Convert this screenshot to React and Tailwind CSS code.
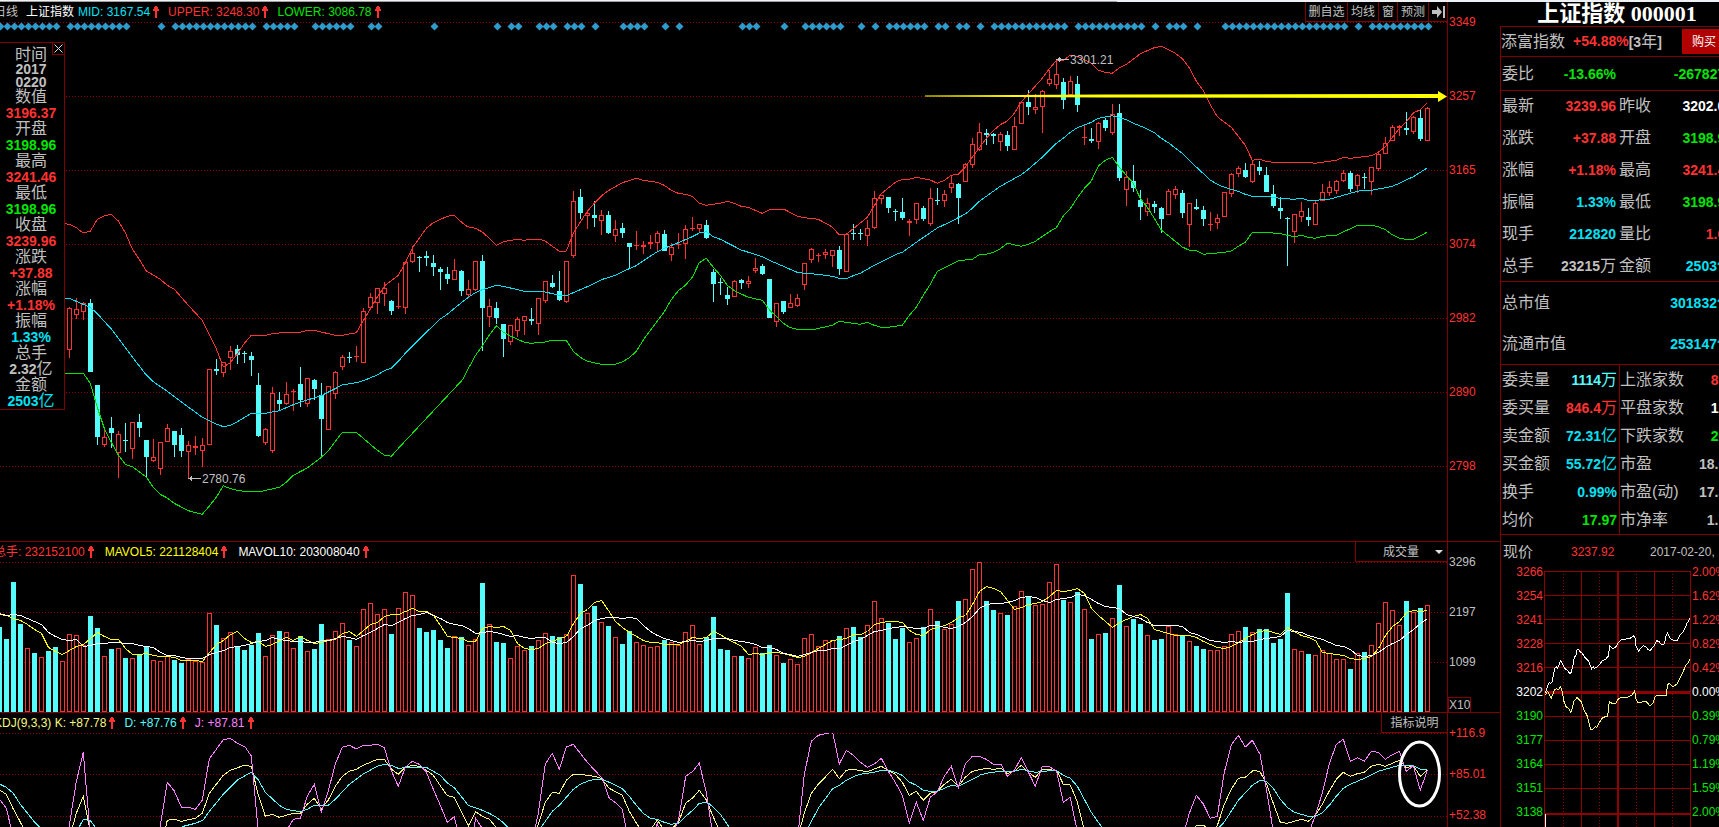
import {useState} from "react";

const SLOT = 7;
const RED = "#ff3232";
const CYAN = "#54fcfc";

// candles: direction, high, body top, body bottom, low (three units to a pixel, counted from `top`)
const CANDLES = [
    {
        from: 10, top: 200, rows: `R320,323,450,473 R294,327,345,357 R305,310,335,360 C297,309,516,516 C555,555,711,735
R688,711,735,741 C651,684,699,744 R693,702,759,834 C669,720,722,756 R666,666,747,777 C642,666,684,711 C720,720,771,832
R717,771,783,786 R726,726,807,825 R672,684,726,726 C693,693,735,771 C684,705,753,771 R723,735,756,834 R708,739,744,765
R714,735,753,801 R507,507,735,735 C477,507,513,525 R486,486,519,531 R438,453,474,510 C435,447,465,492 C453,459,461,489
C456,467,480,528 C519,555,708,711 R683,687,729,735 R561,579,753,759 C576,600,612,630 R546,582,612,615 R567,573,575,633
C501,552,600,621 R534,534,612,621 C537,540,567,600 C549,585,657,773 R558,558,690,690 R513,516,582,597 R465,471,501,510
C456,471,473,489 R438,468,470,486 R324,333,489,489 R280,291,324,327 R264,264,309,342`
    },
    {
        from: 55, top: 160, rows: `R366,384,402,438 C420,423,453,465 R369,438,440,447 R306,306,444,462 R258,279,306,309
C288,291,293,336 C273,289,294,318 C285,309,321,348 C321,327,336,390 C321,342,357,372 R297,330,360,360 C330,333,393,408
R360,387,405,414 R303,303,390,393 C285,303,444,573 R417,438,471,501 C426,444,474,492 C492,492,537,591 R495,495,546,555
R471,477,513,531 R468,468,483,525 C444,477,483,495 R414,414,492,525 R363,363,423,429 C345,369,381,384 C333,393,420,423
R303,303,426,429 R93,123,288,294 C87,111,159,177 R150,159,168,207 C123,165,174,201 R150,165,183,225 C153,165,219,222
R180,207,228,246 C189,204,219,234 C249,249,261,324 R213,255,257,270 R243,255,261,282 R225,246,252,267 R213,219,249,273
C210,222,273,273 R249,261,285,303 R219,251,254,267 R195,207,252,297 R171,204,206,213 R192,192,207,219 C180,195,234,237
C327,336,372,426 C354,366,369,405 C381,405,417,435 R360,363,411,411 C357,360,369,387 R348,363,372,384 R294,324,333,339
C312,318,342,345 C357,357,474,474 R429,429,486,501`
    },
    {
        from: 112, top: 30, rows: `C813,813,846,852 R792,819,834,834 R792,804,828,831 R699,699,765,780 R654,657,690,699
R669,675,677,696 R657,666,675,687 R660,660,678,711 C648,660,717,735 R612,612,726,726 C582,609,611,630 C597,609,611,630
R570,594,618,648 R483,504,594,597 R495,495,507,522 C501,501,534,549 C537,543,545,573 C504,546,564,570 R567,573,579,618
R519,519,570,582 C528,534,567,573 R474,504,582,588 C474,510,512,525 R480,492,513,531 R438,459,474,489 C459,462,504,582
R399,402,456,456 R324,342,405,414 R279,306,360,363 C297,309,315,345 C309,312,318,342 R306,312,336,363 C303,315,348,363
R261,288,360,360 R216,216,282,282 C180,216,231,255 R192,231,240,252 R180,183,231,309 R119,147,162,168 R90,132,165,177
C144,156,210,237 R138,153,195,195 C138,162,225,246 R284,321,323,345 C294,327,333,339 R276,279,336,357 C264,270,294,303
R222,252,309,315 C222,249,444,453 R423,441,480,528 C405,453,474,486 C480,510,531,570 R504,519,546,558 C513,522,531,549
C531,534,567,609 R477,483,555,555 R468,477,495,507 C480,489,549,564 R519,519,585,651 C507,531,537,540 C528,540,567,588
R546,581,583,603 R552,564,579,597 R486,486,561,561 R429,432,492,501 R408,414,432,441 C399,420,441,444 R393,402,456,459
C393,411,423,435 C411,435,486,486 C465,492,528,534 C501,534,543,567 C561,564,566,708 R552,552,606,639 R516,543,561,576
C534,561,570,588 R513,519,585,585 R462,486,513,513 R453,471,489,498 R450,453,483,492 R420,429,453,456 C423,429,477,486
R432,435,468,489 C429,441,443,477 R411,411,456,495 R363,372,417,423 R321,339,372,372 R285,291,333,333 R285,288,294,318
C246,294,300,315 R258,261,306,312 C240,264,327,333 R231,234,333,333`
    },
];

const PRICE_TOP = 22;
const candles = CANDLES.flatMap(({from, top, rows}) =>
    rows.split(/\s+/).map((row, k) => {
        const [high, open, close, low] = row.slice(1).split(",").map((v) => Math.round(v / 3) + top - PRICE_TOP);
        return {i: from + k, up: row[0] === "R", high, open, close: Math.max(close, open + 1), low};
    })
);

// volume bar tops, one per trading day, 531 is the base line
const VOLUME = `C276 C312 C141 C267 R339 C354 R366 C348 C336 R378 R297 R300 R330 C243 C279 R363 C342 R339 C369 R369 C360 C333
R375 R378 R363 C375 C384 R372 R378 R381 R234 C270 R309 R291 C333 C345 C330 C294 R363 R300 C288 R291 R339 C303 R348 C342
C267 R312 R288 R264 C315 R333 R222 R204 R237 R222 C297 R219 R171 R180 C279 C291 C285 C315 C339 R303 C306 R330 R312 C144
R267 C321 C324 R369 R333 R345 C333 R315 R294 C303 C306 R297 R120 C147 R234 C213 R261 C273 R306 C327 C288 R321 R330 R336
R333 C315 R321 R330 R291 R270 R327 C306 C246 C342 C345 R363 C363 R369 R336 C354 C330 R360 C384 R372 R387 R309 R297 R333
R315 R315 C303 R279 C276 C306 R270 R198 R249 C264 C312 C279 R321 R309 C276 R222 C258 R282 R267 C198 R192 R102 R81 C198
C225 R234 C240 R213 R168 C186 R210 R207 R141 R87 C195 R201 C171 R222 C312 R297 C294 R249 C150 R273 C252 C267 R300 C315
C312 R273 R297 C303 R318 C333 C342 R345 R345 R333 R297 R288 C276 R291 C282 C282 C324 C312 C174 R342 R348 C357 R360 R345
R354 R372 R372 C402 R354 C351 R330 R264 R201 R225 R270 C198 R231 C219 R210`.split(/\s+/).map((v) => ({up: v[0] === "R", v: +v.slice(1)}));

const volY = (v) => Math.round((v - 81) / 3);

// moving average; `seed` holds the values for the days before the window is full
function average(days, seed) {
    return VOLUME.map((_, i) => {
        const v = i < seed.length ? seed[i] : VOLUME.slice(i - days + 1, i + 1).reduce((s, b) => s + b.v, 0) / days;
        return `${i * SLOT - 0.5},${volY(v) + 0.5}`;
    }).join(" ");
}

const MA5 = average(5, [236, 240, 248, 254]);
const MA10 = average(10, [233, 241, 236, 239, 248, 259, 268, 291, 303]);

// "|" breaks a trace into separate lines
function trace(x0, y0, data) {
    return data.split("|").map((part) =>
        part.trim().split(/\s+/).map((p) => {
            const [u, v] = p.split(",");
            return `${(x0 + u / 3).toFixed(1)},${(y0 + v / 3).toFixed(1)}`;
        }).join(" ")
    );
}

const UPPER = [
    trace(0, 178, "195,71 208,73 229,83 250,99 271,94 292,58 313,47 334,43 355,63 376,98 397,147 418,178 439,213 460,225 481,238 502,256 523,268 565,316 607,361 628,403 649,447 670,501 691,488 712,462 733,430 754,406 796,406 817,401 859,397 901,397 922,391 943,391 964,396 1006,406 1027,406 1069,398 1090,362 1111,327 1132,291 1153,260"),
    trace(380, 138, "13,378 55,346 76,309 97,264 139,205 160,188 202,169 223,166 244,186 262,200 286,205 307,216 328,235 349,256 370,245 412,238 433,241 454,238 478,238 496,243 517,259 538,274 559,273 580,220 601,186 622,154 643,130 664,108 685,92 706,80 727,68 769,55 790,61 832,67 853,76 874,91 895,100 916,103 937,109 958,130 979,136 1000,133 1021,130 1042,124 1063,130 1084,139 1105,142 1147,160 1168,149 1190,149"),
    trace(740, 8, "110,538 133,538 172,559 193,563 235,568 277,591 298,615 319,613 340,596 382,562 403,527 424,491 466,457 487,448 508,448 529,442 571,450 592,460 613,451 634,436 655,433 676,411 697,381 718,353 739,325 760,302 781,284 802,273 823,250 844,215 865,192 886,168 907,145 928,116 949,92 970,91 991,76 1012,79 1054,100 1075,121 1096,127 1117,130 1138,114 1159,103 1180,88 1201,71"),
    trace(1080, 8, "181,71 223,53 244,49 286,70 307,86 328,113 349,153 370,182 391,224 412,260 454,292 475,319 496,346 517,391 538,388 559,394 580,397 685,397 706,400 727,397 769,391 790,382 811,385 874,377 895,367 916,350 937,322 958,296 979,275 1000,249 1021,239 1041,220"),
].flat().join(" ");

const MID = [
    trace(0, 178, "195,295 208,295 229,304 271,322 292,341 334,387 397,471 439,525 460,545 502,574 565,621 607,652 649,672 670,680 691,676 712,665 754,640 796,640 838,632 880,614 922,600 964,587 1027,555 1069,548 1090,542 1132,525"),
    trace(380, 138, "13,632 34,625 55,604 76,580 139,517 181,477 202,463 244,428 265,412 286,398 307,389 349,376 370,379 433,394 496,396 538,406 562,406 580,398 622,380 664,359 706,346 727,335 769,317 790,302 832,275 853,265 895,248 937,230 958,219 979,215 1000,230 1021,238 1084,270"),
    trace(740, 8, "67,680 88,691 130,709 172,727 193,730 235,733 277,739 298,745 322,745 340,737 361,730 403,706 466,674 487,667 529,637 571,608 592,594 634,574 676,552 697,535 718,514 739,499 781,469 844,434 865,418 907,382 949,340 970,325 991,307 1012,293 1054,277 1075,265 1117,257 1138,263 1159,269 1180,280"),
    trace(1080, 8, "181,288 202,297 223,308 244,325 265,338 307,370 349,411 391,450 412,463 433,472 475,484 496,493 517,499 559,499 580,502 601,505 643,508 664,505 685,511 706,511 748,508 769,502 811,490 832,484 853,481 874,481 916,473 937,469 958,460 1000,440 1021,427 1041,414"),
].flat().join(" ");

const LOWER = [
    trace(0, 178, "195,520 250,520 271,550 292,622 313,685 334,727 355,765 376,793 397,800 439,831 460,862 481,883 502,894 523,910 565,932 607,943 628,918 649,892 670,857 691,866 712,871 733,874 784,874 838,862 859,847 880,826 922,804 964,772 985,752 1027,697 1069,697 1090,715 1132,751 1153,765 1174,769 1198,742"),
    trace(380, 138, "247,660 265,626 286,587 307,558 328,525 349,497 370,516 391,528 433,547 454,550 496,546 517,541 559,541 580,574 601,592 622,604 664,613 706,613 727,606 748,593 769,574 790,540 811,511 853,455 874,419 895,392 916,376 937,352 958,308 979,295 1000,322 1021,346 1042,376 1063,392"),
    trace(740, 8, "4,792 25,802 67,811 88,839 130,880 151,893 172,898 223,898 277,886 298,874 361,883 382,877 403,886 424,892 445,892 487,886 508,856 529,832 550,796 571,763 592,724 613,713 655,692 697,688 718,674 739,673 760,667 781,656 802,640 844,649 865,643 886,634 928,605 949,593 970,558 991,536 1012,503 1033,475 1054,453 1075,408 1096,391 1117,382 1138,412 1159,436"),
    trace(1080, 8, "160,460 181,505 202,532 223,565 244,600 307,651 328,661 349,662 370,673 433,667 454,663 475,649 496,637 517,607 559,607 601,611 622,616 643,620 664,616 685,622 706,625 727,619 769,616 790,606 811,596 832,586 874,586 895,590 916,599 937,614 958,625 979,628 1000,628 1021,617 1041,607"),
].flat().join(" ");

const KDJ_TOP = -198;
const J_LINE = [
    ...trace(0, KDJ_TOP, "0,795 19,820 36,890|205,890 229,740 250,652 270,890|478,890 502,742 523,768 544,816 565,817 586,823 607,795 628,672 649,643 670,614 691,610 712,625 736,637 754,663 775,890|858,890 880,853 901,850 922,784 943,748 964,831 985,768 1006,687 1027,637 1048,631 1069,642 1090,631 1111,631 1132,628 1153,638 1174,707 1195,754 1216,697 1237,679 1258,688 1279,711 1300,763 1321,811 1342,862 1363,845 1374,890|1419,890 1427,850 1453,890"),
    ...trace(480, KDJ_TOP, "163,890 175,835 196,687 217,655 238,703 259,636 280,628 322,682 367,730 388,790 409,805 427,823 440,890|525,890 532,865 539,890|582,890 596,853 617,724 638,709 658,685 679,772 697,890|955,890 973,718 994,619 1015,601 1036,596 1058,592 1078,687 1099,646 1120,661 1141,681 1162,697 1183,687 1204,670 1225,709 1246,742 1267,781 1288,865 1309,802 1330,856 1351,787 1372,770 1393,724 1414,694 1435,759 1456,687 1477,664 1500,664"),
    ...trace(960, KDJ_TOP, "58,664 79,673 100,688 123,688 142,724 163,706 184,668 205,711 226,754 247,694 268,694 290,710 310,802 331,787 352,890|673,890 688,835 709,781 730,807 751,850 772,844 793,712 814,630 835,601 856,636 877,616 900,658 919,760 940,890|1048,890 1066,841 1087,775 1108,687 1129,628 1150,613 1171,679 1192,668 1213,679 1234,649 1255,652 1276,673 1297,659 1318,649 1339,709 1360,692 1381,766 1402,706"),
];
const K_LINE = [
    ...trace(0, KDJ_TOP, "0,766 19,778 40,822 61,861 76,890|214,890 229,835 250,784 271,890|494,890 502,856 523,853 544,859 586,850 607,835 628,775 670,721 691,706 733,691 754,694 775,780 796,844 817,838 838,847 880,835 901,835 922,808 943,790 964,822 985,795 1006,754 1027,724 1048,709 1069,703 1090,691 1132,673 1153,673 1174,702 1195,718 1216,697 1237,691 1258,694 1279,706 1300,721 1321,752 1342,782 1363,787 1384,829 1405,873 1427,830 1447,844 1468,853 1500,890"),
    ...trace(480, KDJ_TOP, "168,890 196,802 217,772 238,775 259,736 280,718 301,718 343,724 364,730 388,760 427,781 448,829 469,864 488,890|508,890 532,855 556,890|568,890 596,860 617,804 638,789 658,766 679,795 700,846 720,890|958,890 973,835 994,775 1015,748 1058,703 1078,731 1099,706 1120,703 1162,710 1204,694 1246,718 1267,742 1288,781 1309,769 1330,796 1351,775 1372,769 1393,748 1414,733 1435,754 1456,727 1477,709 1519,700"),
    ...trace(960, KDJ_TOP, "79,700 100,703 123,700 142,716 163,709 184,691 205,712 226,727 247,703 290,706 310,748 331,750 352,800 374,890|698,890 709,871 733,871 744,890|764,890 772,872 793,808 814,763 835,730 856,727 880,706 900,710 919,745 940,805 961,862 982,865 1024,853 1045,859 1066,841 1087,808 1108,768 1129,733 1150,712 1171,724 1192,716 1213,712 1234,694 1255,688 1276,694 1297,685 1318,676 1339,698 1360,692 1381,724 1402,706"),
];
const D_LINE = [
    ...trace(0, KDJ_TOP, "0,748 19,757 40,775 61,808 82,834 103,860 132,890|230,890 250,853 271,857 296,890|530,890 550,874 586,865 610,855 628,829 670,778 712,735 754,712 775,735 796,772 838,811 859,823 901,830 922,823 943,811 985,811 1006,793 1048,748 1090,717 1132,694 1153,688 1174,691 1195,700 1237,697 1279,697 1321,721 1342,744 1363,758 1405,811 1447,826 1468,835 1489,847 1510,863 1535,890"),
    ...trace(480, KDJ_TOP, "174,890 217,829 238,811 280,763 301,748 322,739 343,733 367,733 388,742 427,761 448,784 469,811 490,835 511,850 532,853 553,862 574,868 596,865 617,844 638,826 658,805 682,802 703,819 721,838 742,868 757,890|978,890 1015,820 1058,761 1078,751 1099,736 1120,725 1141,718 1183,712 1204,706 1225,706 1246,712 1267,721 1288,741 1309,751 1330,766 1351,769 1372,769 1414,751 1435,754 1456,744 1500,721"),
    ...trace(960, KDJ_TOP, "58,721 79,715 121,709 163,709 184,703 226,712 268,707 290,707 310,721 331,730 352,754 373,793 394,832 415,862 436,890|766,890 793,861 835,796 877,751 900,736 919,739 940,760 961,793 982,817 1003,832 1045,844 1066,844 1087,833 1108,811 1129,784 1150,760 1171,748 1213,730 1255,709 1318,691 1360,692 1381,703 1402,704"),
];

const DAY_PRICE = trace(-104, -41, "316,490 322,470 325,464 328,458 332,461 337,455 340,437 345,413 349,410 352,416 362,392 368,404 375,416 383,421 389,431 393,428 399,404 403,383 408,374 411,359 416,359 420,365 427,370 434,382 445,392 455,416 460,410 463,416 472,410 476,407 486,393 497,388 505,378 509,347 514,352 520,356 530,348 534,338 545,328 553,328 570,325 582,317 585,325 588,347 592,357 596,365 600,356 610,347 618,351 624,358 630,363 636,354 644,345 650,332 658,335 664,344 673,342 678,318 683,309 690,325 700,331 711,333 720,315 731,303 741,280 745,276 749,265");
const DAY_AVG = trace(-104, -41, "316,494 323,484 334,505 344,478 350,476 354,480 362,470 367,485 371,512 378,530 386,535 392,547 398,532 401,514 411,503 424,515 434,545 440,553 444,567 452,598 457,600 466,590 470,592 485,566 490,562 503,559 508,514 515,520 527,520 536,505 550,502 562,502 575,496 584,483 588,507 594,518 618,514 630,528 640,518 644,502 650,496 678,498 683,464 688,460 698,470 712,462 720,443 731,421 739,403 744,400 750,388");

// days that carry a news marker, as [first, last]
const NEWS = [[0, 8], [10, 18], [23, 23], [25, 36], [38, 42], [45, 50], [53, 54], [62, 62], [71, 71], [73, 74], [77, 79], [81, 83],
    [85, 85], [89, 92], [95, 95], [97, 97], [106, 108], [112, 112], [115, 120], [123, 123], [125, 125], [127, 132], [134, 135],
    [137, 138], [140, 140], [142, 152], [154, 163], [165, 165], [167, 169], [171, 171], [175, 192], [194, 194], [196, 204]];
const markers = NEWS.flatMap(([a, b]) => Array.from({length: b - a + 1}, (_, k) => a + k));

const INFO = [
    ["数值", "3196.37", "text-[#ff3232]"],
    ["开盘", "3198.96", "text-[#00e600]"],
    ["最高", "3241.46", "text-[#ff3232]"],
    ["最低", "3198.96", "text-[#00e600]"],
    ["收盘", "3239.96", "text-[#ff3232]"],
    ["涨跌", "+37.88", "text-[#ff3232]"],
    ["涨幅", "+1.18%", "text-[#ff3232]"],
    ["振幅", "1.33%", "text-[#02e2f4]"],
    ["总手", "2.32亿", "text-[#c0c0c0]"],
    ["金额", "2503亿", "text-[#02e2f4]"],
];

const QUOTES = [
    ["最新", "3239.96", "text-[#ff3232]", "昨收", "3202.08", "text-white"],
    ["涨跌", "+37.88", "text-[#ff3232]", "开盘", "3198.96", "text-[#00e600]"],
    ["涨幅", "+1.18%", "text-[#ff3232]", "最高", "3241.46", "text-[#ff3232]"],
    ["振幅", "1.33%", "text-[#02e2f4]", "最低", "3198.96", "text-[#00e600]"],
    ["现手", "212820", "text-[#02e2f4]", "量比", "1.05", "text-[#ff3232]"],
    ["总手", "23215万", "text-[#c0c0c0]", "金额", "2503亿", "text-[#02e2f4]"],
];

const DEPTH = [
    ["委卖量", "1114万", "text-[#54fcfc]", "上涨家数", "873", "text-[#ff3232]"],
    ["委买量", "846.4万", "text-[#ff3232]", "平盘家数", "121", "text-white"],
    ["卖金额", "72.31亿", "text-[#02e2f4]", "下跌家数", "262", "text-[#00e600]"],
    ["买金额", "55.72亿", "text-[#02e2f4]", "市盈", "18.02", "text-[#c0c0c0]"],
    ["换手", "0.99%", "text-[#02e2f4]", "市盈(动)", "17.31", "text-[#c0c0c0]"],
    ["均价", "17.97", "text-[#00e600]", "市净率", "1.76", "text-[#c0c0c0]"],
];

const DAY_LEFT = ["3266", "3254", "3241", "3228", "3216", "3202", "3190", "3177", "3164", "3151", "3138"];
const DAY_RIGHT = ["2.00%", "1.62%", "1.22%", "0.82%", "0.42%", "0.00%", "0.39%", "0.79%", "1.19%", "1.59%", "2.00%"];
const dayColor = (i) => (i < 5 ? "text-[#ff3232]" : i === 5 ? "text-white" : "text-[#00e600]");

function UpArrow() {
    return (
        <svg className="shrink-0" width="8" height="12" viewBox="0 0 8 12" fill="#ff3232" shapeRendering="crispEdges">
            <path d="M3 0h2v1h1v2h1v2H5v7H3V5H1V3h1V1h1z"/>
        </svg>
    );
}

function Reading({className, children}) {
    return (
        <span className={"flex items-center gap-0.5 " + className}>
            {children}
            <UpArrow/>
        </span>
    );
}

// bold figure, with the unit (万, 亿) in the regular label size
function Figure({value, color}) {
    const unit = /[万亿]$/.test(value) ? value.slice(-1) : "";
    return (
        <span className={color}>
            <span className="text-[14px] font-bold">{unit ? value.slice(0, -1) : value}</span>
            {unit && <span className="text-[16px]">{unit}</span>}
        </span>
    );
}

function Grid({rows}) {
    return rows.map((y) => (
        <path key={y} d={`M0 ${y + 0.5}H1447`} stroke="#900000" strokeDasharray="1 2"/>
    ));
}

function PriceChart() {
    return (
        <svg className="block h-[519px] w-full" viewBox="0 0 1447 519" preserveAspectRatio="none" fill="none">
            <g shapeRendering="crispEdges">
                <Grid rows={[0, 74, 148, 222, 296, 370, 444]}/>
                {candles.map((c) => {
                    const x = c.i * SLOT;
                    const color = c.up ? RED : CYAN;
                    return (
                        <g key={c.i}>
                            <path d={`M${x - 0.5} ${c.high}V${c.open}M${x - 0.5} ${c.close}V${c.low}`} stroke={color}/>
                            {c.up && c.close - c.open > 2 ? (
                                <rect x={x - 2.5} y={c.open + 0.5} width="4" height={c.close - c.open - 1} fill="#000" stroke={color}/>
                            ) : (
                                <rect x={x - 3} y={c.open} width="5" height={c.close - c.open} fill={color}/>
                            )}
                        </g>
                    );
                })}
                <polyline points={UPPER} stroke="#ff3232"/>
                <polyline points={MID} stroke="#02e2f4"/>
                <polyline points={LOWER} stroke="#00e600"/>
            </g>
            {markers.map((i) => (
                <path key={i} d={`M${i * SLOT + 0.5} 0.5l4 4l-4 4l-4 -4z`} fill="#2d9ccc"/>
            ))}
            <path d="M925 73.5L1100 72.5L1438 72V69L1447 74.5L1438 80V76L1100 75.5L925 74.5z" fill="#ffff00"/>
            <g stroke="#c0c0c0" shapeRendering="crispEdges">
                <path d="M1056 37.5H1069M1058 36.5H1061M1058 38.5H1061M1059.5 35V40"/>
                <path d="M188 456.5H201M190 455.5H192M190 457.5H192M191.5 454V459"/>
            </g>
            <g fill="#c0c0c0" fontSize="12">
                <text x="1070" y="42">3301.21</text>
                <text x="202" y="461">2780.76</text>
            </g>
        </svg>
    );
}

function VolumeChart() {
    return (
        <svg className="block h-[150px] w-full" viewBox="0 0 1447 150" preserveAspectRatio="none" fill="none" shapeRendering="crispEdges">
            <Grid rows={[0, 50, 100]}/>
            {VOLUME.map((b, i) => {
                const y = volY(b.v);
                return b.up ? (
                    <rect key={i} x={i * SLOT - 2.5} y={y + 0.5} width="4" height={149 - y} fill="#000" stroke={RED}/>
                ) : (
                    <rect key={i} x={i * SLOT - 3} y={y} width="5" height={150 - y} fill={CYAN}/>
                );
            })}
            <polyline points={MA5} stroke="#ffff00"/>
            <polyline points={MA10} stroke="#ffffff"/>
        </svg>
    );
}

function KdjChart() {
    return (
        <svg className="block h-[94px] w-full" viewBox="0 0 1447 94" preserveAspectRatio="none" fill="none">
            <g shapeRendering="crispEdges">
                <Grid rows={[0, 41, 83]}/>
                {K_LINE.map((p, i) => <polyline key={i} points={p} stroke="#f8f880"/>)}
                {D_LINE.map((p, i) => <polyline key={i} points={p} stroke="#54fcfc"/>)}
                {J_LINE.map((p, i) => <polyline key={i} points={p} stroke="#ff80ff"/>)}
            </g>
            <ellipse cx="1419.5" cy="41" rx="20" ry="32" stroke="#ffffff" strokeWidth="3"/>
        </svg>
    );
}

function InfoBox({onClose}) {
    return (
        <aside className="absolute top-10 left-0 w-[65px] border border-l-0 border-[#800000] bg-black pt-1 pr-0.5 text-center text-[#c0c0c0]">
            <button
                aria-label="关闭"
                className="absolute top-0 right-0 flex h-3 w-3 items-center justify-center border-b border-l border-[#800000]"
                onClick={onClose}
            >
                <svg width="9" height="9" viewBox="0 0 9 9" stroke="#e0e0e0">
                    <path d="M0.5 0.5L8.5 8.5M8.5 0.5L0.5 8.5"/>
                </svg>
            </button>
            <div className="h-4 text-base leading-4">时间</div>
            <div className="text-[14px] leading-[13px] font-bold">2017<br/>0220</div>
            {INFO.map(([label, value, color]) => (
                <div key={label} className="leading-4">
                    <div className="h-4 text-[16px]">{label}</div>
                    <div className="h-4"><Figure value={value} color={color}/></div>
                </div>
            ))}
        </aside>
    );
}

function Pair({label, value, color}) {
    return (
        <div className="flex h-5 items-center justify-between leading-5">
            <span className="text-[16px]">{label}</span>
            <Figure value={value} color={color}/>
        </div>
    );
}

function DayChart() {
    return (
        <div className="flex text-xs">
            <ul className="-mt-2 w-[43px] pr-px text-right leading-6">
                {DAY_LEFT.map((t, i) => <li key={t} className={dayColor(i)}>{t}</li>)}
            </ul>
            <svg className="mt-[3px] block shrink-0" width="148" height="256" viewBox="0 0 148 256" fill="none" stroke="#900000" shapeRendering="crispEdges">
                {[0, 24, 48, 72, 96, 145, 169, 193, 217].map((y) => (
                    <path key={y} d={`M0 ${y + 0.5}H147`}/>
                ))}
                <path d="M0 121.5H147" strokeWidth="3"/>
                <path d="M0 243H147M74 0V256" strokeWidth="2"/>
                <path d="M0.5 0V256M37.5 0V256M110.5 0V256M146.5 0V256"/>
                <path d="M19.5 0V256M55.5 0V256M92.5 0V256M128.5 0V256" strokeDasharray="1 2"/>
                <polyline points={DAY_AVG[0]} stroke="#f8f880"/>
                <polyline points={DAY_PRICE[0]} stroke="#ffffff"/>
                <path d="M1.5 243V256" stroke="#ffffff"/>
            </svg>
            <ul className="-mt-2 leading-6">
                {DAY_RIGHT.map((t, i) => <li key={i} className={dayColor(i)}>{t}</li>)}
            </ul>
        </div>
    );
}

export default function App() {
    const [showInfo, setShowInfo] = useState(true);

    return (
        <div className="flex min-h-screen flex-col overflow-hidden bg-black font-['Liberation_Sans','Noto_Sans_CJK_SC',sans-serif] text-[#c0c0c0]">
            <div className="flex h-0.5 bg-[#eef2f6]">
                <div className="w-[65%] border-b border-[#a0a0a0]"></div>
            </div>
            <div className="flex flex-1">
                <main className="min-w-0 flex-1 text-xs">
                    <section className="flex">
                        <div className="relative min-w-0 flex-1 overflow-hidden border-r border-[#800000]">
                            <header className="flex h-5 items-center justify-between">
                                <div className="-ml-1.5 flex items-center gap-1 whitespace-nowrap">
                                    <div className="flex gap-2">
                                        <span>日线</span>
                                        <h2 className="text-white">上证指数</h2>
                                    </div>
                                    <div className="flex gap-2">
                                        <Reading className="text-[#02e2f4]">MID: 3167.54</Reading>
                                        <Reading className="text-[#ff3232]">UPPER: 3248.30</Reading>
                                        <Reading className="text-[#00e600]">LOWER: 3086.78</Reading>
                                    </div>
                                </div>
                                <nav className="flex h-5 divide-x divide-[#800000] border-b border-l border-[#800000] leading-5">
                                    <button className="w-[42px]">删自选</button>
                                    <button className="w-[31px]">均线</button>
                                    <button className="w-[19px]">窗</button>
                                    <button className="w-[31px]">预测</button>
                                    <button aria-label="展开" className="flex w-[18px] items-center justify-center">
                                        <svg width="13" height="12" viewBox="0 0 13 12" fill="#c0c0c0">
                                            <path d="M0 4h5V0l5 6l-5 6V8H0zM11 0h2v12h-2z"/>
                                        </svg>
                                    </button>
                                </nav>
                            </header>
                            <PriceChart/>
                            {showInfo && <InfoBox onClose={() => setShowInfo(false)}/>}
                        </div>
                        <div className="flex w-[52px] flex-col gap-[58px] pt-3 pl-px leading-4 text-[#ff3232]">
                            {["3349", "3257", "3165", "3074", "2982", "2890", "2798"].map((t) => <span key={t}>{t}</span>)}
                        </div>
                    </section>

                    <section className="flex border-t border-[#800000]">
                        <div className="min-w-0 flex-1 overflow-hidden border-r border-[#800000]">
                            <header className="flex h-5 items-center justify-between">
                                <div className="-ml-1.5 flex items-center gap-2.5 whitespace-nowrap">
                                    <Reading className="text-[#ff3232]">总手: 232152100</Reading>
                                    <Reading className="text-[#ffff00]">MAVOL5: 221128404</Reading>
                                    <Reading className="text-white">MAVOL10: 203008040</Reading>
                                </div>
                                <div className="relative h-5 w-[92px] border-b border-l border-[#800000]">
                                    <select aria-label="指标" className="block h-full w-full appearance-none bg-black pl-[27px] leading-4">
                                        <option>成交量</option>
                                    </select>
                                    <svg className="pointer-events-none absolute top-2 right-1" width="8" height="4" viewBox="0 0 8 4" fill="#e0e0e0">
                                        <path d="M0 0h8L4 4z"/>
                                    </svg>
                                </div>
                            </header>
                            <VolumeChart/>
                        </div>
                        <div className="flex w-[52px] flex-col pt-3 leading-4">
                            <div className="flex flex-col gap-[34px] pl-px">
                                <span>3296</span>
                                <span>2197</span>
                                <span>1099</span>
                            </div>
                            <span className="mt-auto w-[23px] border border-b-0 border-[#800000] leading-[14px]">X10</span>
                        </div>
                    </section>

                    <section className="flex border-t border-[#800000]">
                        <div className="min-w-0 flex-1 overflow-hidden border-r border-[#800000]">
                            <header className="flex h-5 items-center justify-between">
                                <div className="-ml-1.5 flex items-center gap-2 whitespace-nowrap">
                                    <Reading className="text-[#f8f880]">KDJ(9,3,3) K: +87.78</Reading>
                                    <Reading className="text-[#54fcfc]">D: +87.76</Reading>
                                    <Reading className="text-[#ff80ff]">J: +87.81</Reading>
                                </div>
                                <button className="h-5 w-[66px] border-b border-l border-[#800000]">指标说明</button>
                            </header>
                            <KdjChart/>
                        </div>
                        <div className="flex w-[52px] flex-col gap-[25px] pt-3 pl-px leading-4 text-[#ff3232]">
                            <span>+116.9</span>
                            <span>+85.01</span>
                            <span>+52.38</span>
                        </div>
                    </section>
                </main>

                <aside className="w-[219px] shrink-0 overflow-hidden">
                    <div className="w-[234px]">
                        <h1 className="h-6 text-center font-['Liberation_Serif','Noto_Sans_CJK_SC',serif] text-[22px] leading-6 font-bold text-white">
                            上证指数 000001
                        </h1>
                        <div className="border-l border-[#800000]">
                            <div className="flex h-[30px] items-center border-t border-[#800000]">
                                <span className="text-[16px]">添富指数</span>
                                <span className="ml-2 text-[14px] font-bold text-[#ff3232]">+54.88%</span>
                                <span className="text-[14px] font-bold">[3<span className="text-[16px] font-normal">年</span>]</span>
                                <button className="mr-2 ml-auto h-[25px] w-11 bg-[#b00000] text-xs text-white">购买</button>
                            </div>
                            <div className="grid h-[34px] grid-cols-[114px_1fr] items-center gap-[3px] border-t border-[#800000] px-px">
                                <Pair label="委比" value="-13.66%" color="text-[#00e600]"/>
                                <div className="text-right"><Figure value="-2678270" color="text-[#00e600]"/></div>
                            </div>
                            <div className="flex flex-col gap-3 border-t border-[#800000] py-[5px]">
                                {QUOTES.map(([a, av, ac, b, bv, bc]) => (
                                    <div key={a} className="grid grid-cols-[114px_1fr] gap-[3px] px-px">
                                        <Pair label={a} value={av} color={ac}/>
                                        <Pair label={b} value={bv} color={bc}/>
                                    </div>
                                ))}
                            </div>
                            <div className="flex flex-col gap-[21px] border-t border-[#800000] px-px pt-[11px] pb-2.5">
                                <Pair label="总市值" value="301832亿" color="text-[#02e2f4]"/>
                                <Pair label="流通市值" value="253147亿" color="text-[#02e2f4]"/>
                            </div>
                            <div className="grid grid-cols-[118px_1fr] border-y border-[#800000]">
                                <div className="flex flex-col gap-2 pt-[5px] pr-0.5 pb-1 pl-px">
                                    {DEPTH.map(([a, av, ac]) => <Pair key={a} label={a} value={av} color={ac}/>)}
                                </div>
                                <div className="flex flex-col gap-2 border-l border-[#800000] pt-[5px] pb-1">
                                    {DEPTH.map(([, , , b, bv, bc]) => <Pair key={b} label={b} value={bv} color={bc}/>)}
                                </div>
                            </div>
                            <div className="flex h-[33px] items-center pl-0.5 text-xs">
                                <span className="w-[68px] text-[15px]">现价</span>
                                <span className="w-[79px] text-[#ff3232]">3237.92</span>
                                <span>2017-02-20,</span>
                            </div>
                            <DayChart/>
                        </div>
                    </div>
                </aside>
            </div>
        </div>
    );
}
